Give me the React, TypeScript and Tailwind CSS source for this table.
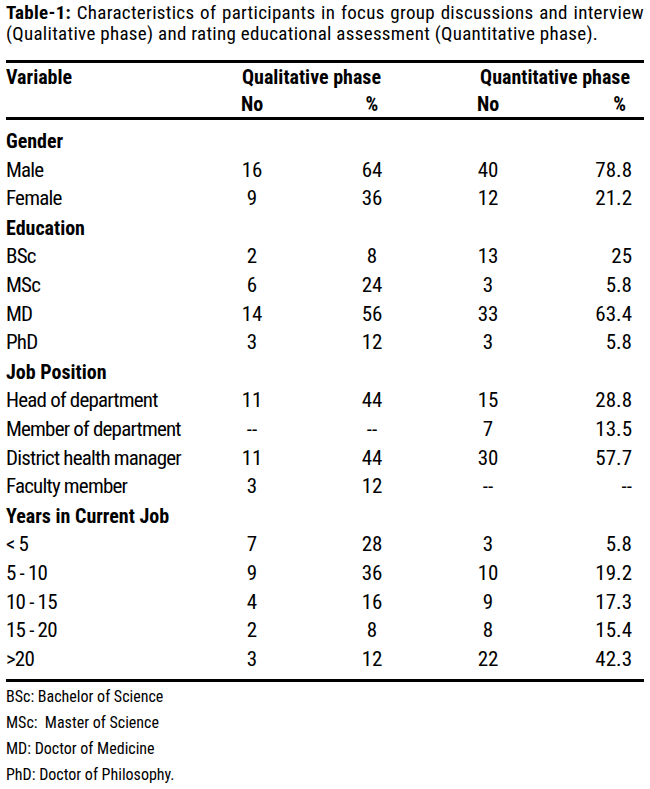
type Row = { label: string; group?: boolean; v?: [string, string, string, string] }

const rows: Row[] = [
  { label: 'Gender', group: true },
  { label: 'Male', v: ['16', '64', '40', '78.8'] },
  { label: 'Female', v: ['9', '36', '12', '21.2'] },
  { label: 'Education', group: true },
  { label: 'BSc', v: ['2', '8', '13', '25'] },
  { label: 'MSc', v: ['6', '24', '3', '5.8'] },
  { label: 'MD', v: ['14', '56', '33', '63.4'] },
  { label: 'PhD', v: ['3', '12', '3', '5.8'] },
  { label: 'Job Position', group: true },
  { label: 'Head of department', v: ['11', '44', '15', '28.8'] },
  { label: 'Member of department', v: ['--', '--', '7', '13.5'] },
  { label: 'District health manager', v: ['11', '44', '30', '57.7'] },
  { label: 'Faculty member', v: ['3', '12', '--', '--'] },
  { label: 'Years in Current Job', group: true },
  { label: '< 5', v: ['7', '28', '3', '5.8'] },
  { label: '5 - 10', v: ['9', '36', '10', '19.2'] },
  { label: '10 - 15', v: ['4', '16', '9', '17.3'] },
  { label: '15 - 20', v: ['2', '8', '8', '15.4'] },
  { label: '>20', v: ['3', '12', '22', '42.3'] },
]

const notes = [
  'BSc: Bachelor of Science',
  'MSc:  Master of Science',
  'MD: Doctor of Medicine',
  'PhD: Doctor of Philosophy.',
]

const cols = 'grid grid-cols-[216px_60px_180px_52px_1fr] items-center'

export default function App() {
  return (
    <div className="w-[650px] bg-white px-[6px] pt-[2px] text-black font-['Liberation_Sans_Narrow','Arial_Narrow','Roboto_Condensed','DejaVu_Sans_Condensed',sans-serif]">
      {/* caption */}
      <div className="text-[19px] leading-[21px] tracking-[0.3px]">
        <p className="[text-align-last:justify]">
          <span className="font-bold">Table-1:</span> Characteristics of participants in focus group discussions and interview
        </p>
        <p>(Qualitative phase) and rating educational assessment (Quantitative phase).</p>
      </div>

      <div className="mt-[16px] h-[3px] bg-black" />

      {/* header */}
      <div className={`${cols} auto-rows-[27px] text-[20px] font-bold`}>
        <div>Variable</div>
        <div className="col-span-2 pl-[20px]">Qualitative phase</div>
        <div className="col-span-2 pr-[14px] text-right">Quantitative phase</div>
        <div />
        <div className="text-center">No</div>
        <div className="text-center">%</div>
        <div className="text-center">No</div>
        <div className="pr-[18px] text-right">%</div>
      </div>

      <div className="h-[3px] bg-black" />

      {/* body */}
      <div className={`${cols} auto-rows-[28.8px] pt-[7px] pb-[5px] text-[21px] leading-none`}>
        {rows.map((r) =>
          r.group ? (
            <div key={r.label} className="col-span-5 text-[20px] font-bold">
              {r.label}
            </div>
          ) : (
            <Cells key={r.label} row={r} />
          ),
        )}
      </div>

      <div className="h-[3px] bg-black" />

      {/* footnotes */}
      <div className="pt-[2px] text-[16px] leading-[26px]">
        {notes.map((n) => (
          <p key={n} className="whitespace-pre">
            {n}
          </p>
        ))}
      </div>
    </div>
  )
}

function Cells({ row }: { row: Row }) {
  const [a, b, c, d] = row.v!
  return (
    <>
      <div className="tracking-[-0.8px]">{row.label}</div>
      <div className="text-center">{a}</div>
      <div className="text-center">{b}</div>
      <div className="text-center">{c}</div>
      <div className="pr-[12px] text-right">{d}</div>
    </>
  )
}
